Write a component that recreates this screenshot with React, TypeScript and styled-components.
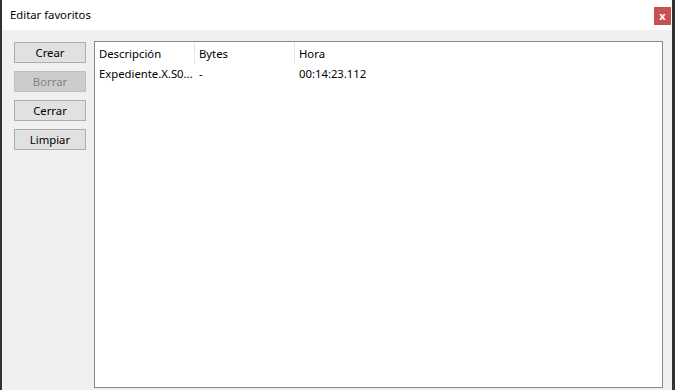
import styled, { createGlobalStyle } from "styled-components"

const GlobalStyle = createGlobalStyle`
    html, body {
        margin: 0;
        padding: 0;
        width: 675px;
        height: 390px;
        overflow: hidden;
        font-family: "Noto Sans", "Open Sans", sans-serif;
        font-size: 11px;
        color: #000;
    }
`

const Frame = styled.div`
    width: 675px;
    height: 390px;
    box-sizing: border-box;
    border-left: 2px solid #34302f;
    border-right: 3px solid #34302f;
    display: flex;
    flex-direction: column;
    background: #f0f0f0;
`

const TitleBar = styled.div`
    height: 30px;
    flex: none;
    background: #ffffff;
    display: flex;
    align-items: center;
    justify-content: space-between;
    padding-left: 8px;
    padding-right: 1px;
`

const Title = styled.span`
    font-size: 11.3px;
    line-height: 16px;
    margin-top: -1px;
`

const CloseButton = styled.div`
    width: 17px;
    height: 18px;
    background: #c75050;
    color: #ffffff;
    font-weight: bold;
    font-size: 11px;
    line-height: 16px;
    display: flex;
    align-items: center;
    justify-content: center;
    margin-top: 2px;
`

const Body = styled.div`
    flex: 1;
    display: flex;
    gap: 8px;
    padding: 11px 9px 2px 12px;
    min-height: 0;
`

const ButtonColumn = styled.div`
    display: flex;
    flex-direction: column;
    gap: 8px;
    padding-top: 1px;
    width: 72px;
    flex: none;
`

const Button = styled.button<{ disabled?: boolean }>`
    height: 21px;
    width: 72px;
    box-sizing: border-box;
    margin: 0;
    padding: 0;
    font-family: inherit;
    font-size: 11.3px;
    background: ${p => (p.disabled ? "#cccccc" : "#e1e1e1")};
    border: 1px solid ${p => (p.disabled ? "#bfbfbf" : "#adadad")};
    color: ${p => (p.disabled ? "#838383" : "#000000")};
`

const ListBox = styled.div`
    flex: 1;
    background: #ffffff;
    border: 1px solid #828790;
`

const Row = styled.div<{ header?: boolean }>`
    display: grid;
    grid-template-columns: 100px 100px 100px;
    height: ${p => (p.header ? "22px" : "18px")};
    align-items: stretch;
`

const Cell = styled.div<{ header?: boolean; last?: boolean }>`
    padding-left: 4px;
    display: flex;
    align-items: center;
    white-space: nowrap;
    font-size: 11.3px;
    border-right: ${p => (p.header && !p.last ? "1px solid #e5e5e5" : "1px solid transparent")};
`

export default function App() {
    return (
        <>
            <GlobalStyle />
            <Frame>
                <TitleBar>
                    <Title>Editar favoritos</Title>
                    <CloseButton>x</CloseButton>
                </TitleBar>
                <Body>
                    <ButtonColumn>
                        <Button>Crear</Button>
                        <Button disabled>Borrar</Button>
                        <Button>Cerrar</Button>
                        <Button>Limpiar</Button>
                    </ButtonColumn>
                    <ListBox>
                        <Row header>
                            <Cell header>Descripción</Cell>
                            <Cell header>Bytes</Cell>
                            <Cell header last>Hora</Cell>
                        </Row>
                        <Row>
                            <Cell>Expediente.X.S0...</Cell>
                            <Cell>-</Cell>
                            <Cell>00:14:23.112</Cell>
                        </Row>
                    </ListBox>
                </Body>
            </Frame>
        </>
    )
}
